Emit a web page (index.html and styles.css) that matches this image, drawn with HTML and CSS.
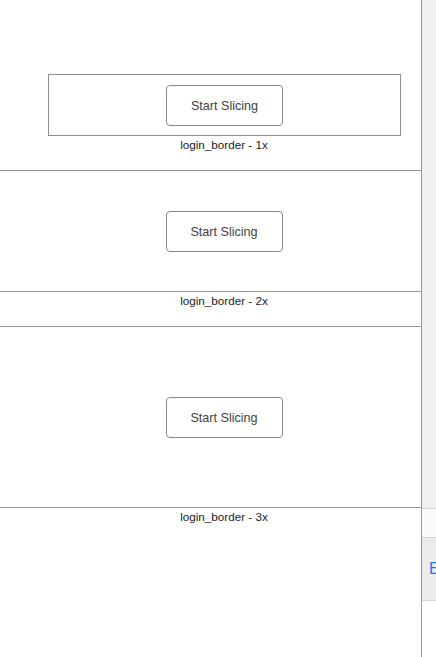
FILE: index.html
```html
<!DOCTYPE html>
<html>
<head>
<meta charset="utf-8">
<link rel="stylesheet" href="styles.css">
</head>
<body>
<div class="app">
  <main class="canvas">
    <div class="inner">
      <section class="slice slice-1x">
        <div class="frame frame-1x">
          <div class="btn">Start Slicing</div>
        </div>
        <div class="label">login_border - 1x</div>
      </section>
      <section class="slice">
        <div class="frame frame-2x">
          <div class="btn">Start Slicing</div>
        </div>
        <div class="label">login_border - 2x</div>
      </section>
      <section class="slice">
        <div class="frame frame-3x">
          <div class="btn">Start Slicing</div>
        </div>
        <div class="label">login_border - 3x</div>
      </section>
    </div>
  </main>
  <aside class="sidebar">
    <div class="side-top"></div>
    <div class="side-blank"></div>
    <div class="side-action"><span class="export">Export</span></div>
    <div class="side-rest"></div>
  </aside>
</div>
</body>
</html>
```

FILE: styles.css
```css
* { box-sizing: border-box; }
html, body {
  margin: 0;
  padding: 0;
  background: #ffffff;
  font-family: "Liberation Sans", Arial, sans-serif;
}
.app {
  display: flex;
  width: 436px;
  height: 657px;
  overflow: hidden;
}
.canvas {
  width: 421px;
  flex: none;
  overflow: hidden;
  background: #ffffff;
}
.inner {
  width: 448px;
}
.slice-1x {
  padding-top: 74px;
}
.frame {
  display: flex;
  align-items: center;
  justify-content: center;
  border-top: 1px solid #959595;
  border-bottom: 1px solid #959595;
}
.frame-1x {
  margin-left: 48px;
  width: 353px;
  height: 62px;
  border: 1px solid #8f8f8f;
}
.frame-2x {
  width: 448px;
  height: 122px;
}
.frame-3x {
  width: 448px;
  height: 182px;
}
.btn {
  width: 117px;
  height: 41px;
  padding-top: 2px;
  border: 1px solid #8a8a8a;
  border-radius: 4px;
  display: flex;
  align-items: center;
  justify-content: center;
  font-size: 12.6px;
  color: #424242;
  background: #ffffff;
}
.label {
  height: 34px;
  padding-top: 2px;
  line-height: 14px;
  text-align: center;
  font-size: 11.7px;
  color: #222222;
}
.sidebar {
  flex: 1;
  border-left: 1px solid #9a9a9a;
  background: #ffffff;
  display: flex;
  flex-direction: column;
  overflow: hidden;
}
.side-top {
  height: 509px;
  background: #f0f0f0;
  border-bottom: 1px solid #d4d4d4;
  flex: none;
}
.side-blank {
  height: 29px;
  background: #fafafa;
  border-bottom: 1px solid #d4d4d4;
  flex: none;
}
.side-action {
  height: 63px;
  background: #ebebeb;
  border-bottom: 1px solid #d4d4d4;
  display: flex;
  align-items: center;
  padding-left: 7px;
  flex: none;
  overflow: hidden;
}
.export {
  font-size: 16px;
  color: #1a7bf2;
  white-space: nowrap;
}
.side-rest {
  flex: 1;
  background: #ffffff;
}
```
